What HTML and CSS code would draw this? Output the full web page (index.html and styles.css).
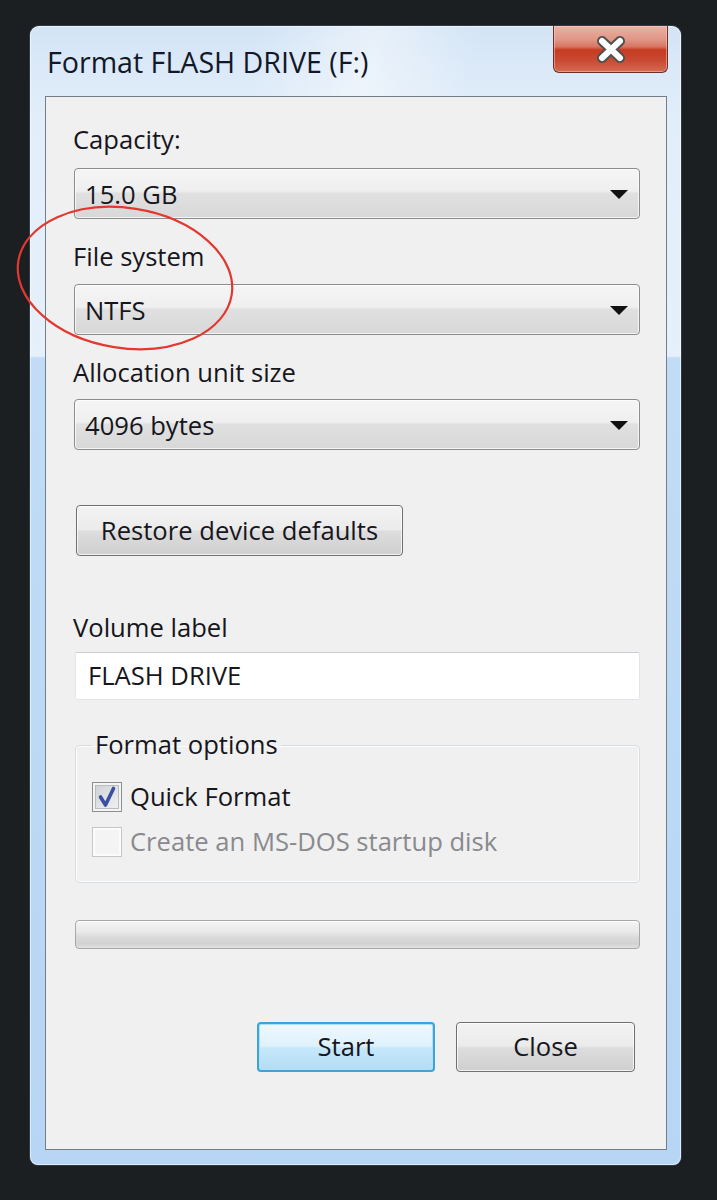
FILE: index.html
```html
<!DOCTYPE html>
<html>
<head>
<meta charset="utf-8">
<title>Format FLASH DRIVE (F:)</title>
<link rel="stylesheet" href="styles.css">
</head>
<body>
<div class="window">
  <div class="titlebar">
    <div class="title">Format FLASH DRIVE (F:)</div>
    <div class="close-btn">
      <svg width="115" height="47" viewBox="0 0 115 47">
        <path d="M50 15 L68 32 M68 15 L50 32" stroke="#505050" stroke-width="10" stroke-linecap="round" fill="none"/>
        <path d="M50 15 L68 32 M68 15 L50 32" stroke="#ffffff" stroke-width="6" stroke-linecap="round" fill="none"/>
      </svg>
    </div>
  </div>
  <div class="panel">
    <div class="label first">Capacity:</div>
    <div class="combo c1"><span class="combo-text">15.0 GB</span><svg class="arrow" width="18" height="10" viewBox="0 0 18 10"><polygon points="0,0 18,0 9,9" fill="#111"/></svg></div>
    <div class="label l2">File system</div>
    <div class="combo c2"><span class="combo-text">NTFS</span><svg class="arrow" width="18" height="10" viewBox="0 0 18 10"><polygon points="0,0 18,0 9,9" fill="#111"/></svg></div>
    <div class="label l2">Allocation unit size</div>
    <div class="combo c3"><span class="combo-text">4096 bytes</span><svg class="arrow" width="18" height="10" viewBox="0 0 18 10"><polygon points="0,0 18,0 9,9" fill="#111"/></svg></div>
    <div class="btn restore">Restore device defaults</div>
    <div class="label vol">Volume label</div>
    <div class="textbox">FLASH DRIVE</div>
    <fieldset class="group">
      <legend class="legend">Format options</legend>
      <div class="check-row">
        <span class="checkbox checked">
          <svg width="28" height="28" viewBox="0 0 28 28"><path d="M7.5 14 L12.5 22 L20.5 5.5" stroke="#3b4fa3" stroke-width="3.6" fill="none" stroke-linecap="round" stroke-linejoin="round"/></svg>
        </span>
        <span class="check-text">Quick Format</span>
      </div>
      <div class="check-row second">
        <span class="checkbox disabled"></span>
        <span class="check-text dim">Create an MS-DOS startup disk</span>
      </div>
    </fieldset>
    <div class="progress"></div>
    <div class="actions">
      <div class="btn start">Start</div>
      <div class="btn close">Close</div>
    </div>
  </div>
</div>
<svg class="annotation" width="260" height="170" viewBox="0 0 260 170">
  <ellipse cx="125" cy="82" rx="108" ry="70" transform="rotate(9 125 82)" fill="none" stroke="#e2382f" stroke-width="2.2"/>
</svg>
</body>
</html>
```

FILE: styles.css
```css
html, body {
  margin: 0;
  padding: 0;
}
body {
  background: #1c1f22;
  padding: 26px 0 0 30px;
  height: 1200px;
  box-sizing: border-box;
  font-family: "Open Sans", "Noto Sans", sans-serif;
  color: #16161c;
  position: relative;
  overflow: hidden;
}
.window {
  width: 651px;
  height: 1139px;
  box-sizing: border-box;
  padding: 0 14px 15px 15px;
  border-radius: 9px 9px 8px 8px;
  background: linear-gradient(to bottom, #d3e4f5 0px, #dbe9f8 40px, #e1edf9 90px, #e6f0fb 330px, #c0dcf6 332px, #b7d5f4 100%);
  box-shadow: inset 0 0 0 1px rgba(255,255,255,0.55), 0 0 0 1px rgba(60,75,90,0.6);
  display: flex;
  flex-direction: column;
}
.titlebar {
  height: 70px;
  display: flex;
  align-items: flex-start;
  background: linear-gradient(100deg, rgba(255,255,255,0) 35%, rgba(255,255,255,0.45) 52%, rgba(255,255,255,0) 68%);
  margin: 0 -14px 0 -15px;
  padding: 0 13px 0 17px;
}
.title {
  padding-top: 20px;
  font-size: 28.6px;
  line-height: 32px;
  color: #131828;
}
.close-btn {
  margin-left: auto;
  width: 115px;
  height: 47px;
  box-sizing: border-box;
  border: 1px solid #6e3026;
  border-top: none;
  border-radius: 0 0 6px 6px;
  background: linear-gradient(to bottom, #eab2a6 0%, #e09584 30%, #d67662 45%, #c63b22 52%, #c94a32 75%, #d56a52 100%);
  box-shadow: inset 0 0 0 1px rgba(255,220,210,0.45);
  display: flex;
  align-items: center;
  justify-content: center;
  overflow: hidden;
}
.close-btn svg {
  display: block;
  margin-left: -2px;
}
.panel {
  height: 1054px;
  box-sizing: border-box;
  background: #f0f0f0;
  border: 1px solid #727e89;
  padding: 27px 26px 0 28px;
  display: flex;
  flex-direction: column;
  font-size: 25.6px;
  line-height: 32px;
}
.label {
  height: 32px;
  margin-left: -1px;
}
.label.l2 {
  margin-top: 22px;
}
.combo {
  margin-top: 12px;
  height: 51px;
  box-sizing: border-box;
  border: 1px solid #8b8c8c;
  border-radius: 4px;
  background: linear-gradient(to bottom, #f5f5f5 0%, #efefef 45%, #e0e0e0 50%, #d8d8d8 100%);
  box-shadow: inset 0 0 0 1px rgba(255,255,255,0.7);
  display: flex;
  align-items: center;
  padding: 0 11px 0 10px;
}
.combo.c2 { margin-top: 11px; }
.combo.c3 { margin-top: 10px; }
.combo-text {
  flex: 1;
  padding-top: 2px;
}
.arrow {
  display: block;
  margin-top: 2px;
}
.btn {
  height: 51px;
  box-sizing: border-box;
  border: 1px solid #707070;
  border-radius: 4px;
  background: linear-gradient(to bottom, #f3f3f3 0%, #ebebeb 48%, #dddddd 52%, #cfcfcf 100%);
  box-shadow: inset 0 0 0 1px rgba(255,255,255,0.75);
  display: flex;
  align-items: center;
  justify-content: center;
}
.restore {
  margin-top: 55px;
  margin-left: 2px;
  width: 327px;
}
.label.vol {
  margin-top: 56px;
}
.textbox {
  margin-top: 8px;
  height: 48px;
  box-sizing: border-box;
  background: #ffffff;
  border: 1px solid #e2e6ea;
  border-top-color: #c9ccd0;
  border-radius: 2px;
  margin-left: 1px;
  padding: 0 12px;
  display: flex;
  align-items: center;
}
.group {
  margin: 29px 0 0 1px;
  padding: 21px 16px 25px 16px;
  border: 1px solid #d5dde3;
  border-radius: 5px;
  box-shadow: inset 0 0 0 1px rgba(255,255,255,0.8);
  min-inline-size: 0;
}
.legend {
  padding: 0 3px;
  line-height: 32px;
  height: 32px;
}
.check-row {
  height: 30px;
  display: flex;
  align-items: center;
  gap: 8px;
}
.check-row.second {
  margin-top: 15px;
}
.checkbox {
  width: 30px;
  height: 30px;
  box-sizing: border-box;
  border: 1px solid #8e8f8f;
  display: flex;
  align-items: center;
  justify-content: center;
}
.checkbox.checked {
  background: #f4f4f4;
  box-shadow: inset 0 0 0 2px #f4f4f4, inset 0 0 0 3px #b9bcbf;
  background-image: linear-gradient(135deg, #cbcfd3 0%, #e4e6e8 60%, #f1f2f3 100%);
}
.checkbox.checked svg {
  display: block;
}
.checkbox.disabled {
  border-color: #c4c7c9;
  background: #f4f4f4;
  box-shadow: inset 0 0 0 2px #fbfbfb;
}
.check-text.dim {
  color: #8a8a8e;
}
.progress {
  margin-top: 37px;
  height: 29px;
  box-sizing: border-box;
  border: 1px solid #a8a8a8;
  border-radius: 4px;
  background: linear-gradient(to bottom, #f4f4f4 0%, #e9e9e9 40%, #dadada 60%, #d2d2d2 85%, #e2e2e2 100%);
  box-shadow: inset 0 1px 0 #ffffff;
  margin-left: 1px;
}
.actions {
  margin-top: 73px;
  display: flex;
  justify-content: flex-end;
  gap: 21px;
  padding-right: 5px;
}
.start, .close {
  height: 50px;
  width: 179px;
}
.start {
  width: 178px;
  border: 2px solid #3fa3d9;
  background: linear-gradient(to bottom, #eef8fe 0%, #dff1fc 48%, #c6e8fb 52%, #b3dcf3 100%);
  box-shadow: inset 0 0 0 1px #a8e2fb;
}
.annotation {
  position: absolute;
  left: 0;
  top: 196px;
  pointer-events: none;
}
```
